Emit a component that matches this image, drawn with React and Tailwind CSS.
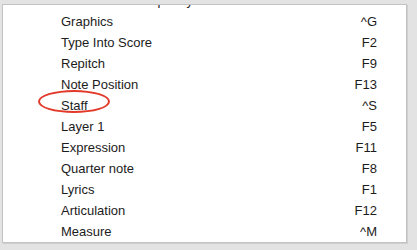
import React from 'react';

const items = [
    { label: 'Selection Tool: Speedy', key: '' },
    { label: 'Graphics', key: '^G' },
    { label: 'Type Into Score', key: 'F2' },
    { label: 'Repitch', key: 'F9' },
    { label: 'Note Position', key: 'F13' },
    { label: 'Staff', key: '^S', circled: true },
    { label: 'Layer 1', key: 'F5' },
    { label: 'Expression', key: 'F11' },
    { label: 'Quarter note', key: 'F8' },
    { label: 'Lyrics', key: 'F1' },
    { label: 'Articulation', key: 'F12' },
    { label: 'Measure', key: '^M' },
];

const App = () => {
    return (
        <div className="w-[417px] h-[250px] bg-[#e3e3e3] pt-[4px] pl-[2px] overflow-hidden" style={{ fontFamily: '"Liberation Sans", Arial, sans-serif' }}>
            <div className="relative w-[405px] h-[239px] bg-white border border-[#c3c3c3] shadow-[1px_1px_0_#cfcfcf] overflow-hidden">
                <div className="-mt-[15px] flex flex-col">
                    {items.map(item => (
                        <div key={item.label} className="h-[21px] flex items-center justify-between pl-[58px] pr-[29px] text-[13px] text-[#1c1c1c]">
                            <span className="relative">
                                {item.label}
                                {item.circled && (
                                    <span className="absolute left-[-23px] top-[-6px] w-[72px] h-[23px] rounded-[50%] border-2 border-[#e23a2a]" />
                                )}
                            </span>
                            <span>{item.key}</span>
                        </div>
                    ))}
                </div>
            </div>
        </div>
    );
};

export default App;
